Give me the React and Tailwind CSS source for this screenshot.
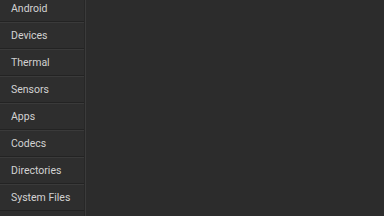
import React from "react";

const items = [
  "Android",
  "Devices",
  "Thermal",
  "Sensors",
  "Apps",
  "Codecs",
  "Directories",
  "System Files",
];

const App = () => {
  return (
    <main
      className="flex w-screen h-screen overflow-hidden bg-[#2c2c2c]"
      style={{ fontFamily: "Roboto, 'Noto Sans', sans-serif" }}
    >
      <aside className="w-[84px] shrink-0 h-full bg-[#2e2e2e]">
        <ul className="-mt-[5px]">
          {items.map((item) => (
            <li
              key={item}
              className="h-[27px] flex items-center pl-[11px] pt-[1px] text-[10.5px] text-[#d2d2d2] border-b border-[#232323] shadow-[inset_0_1px_0_#3a3a3a]"
            >
              {item}
            </li>
          ))}
        </ul>
      </aside>
      <div className="w-[2px] shrink-0 h-full bg-[#3b3b3b] border-l border-[#272727]"></div>
      <section className="flex-1 h-full"></section>
    </main>
  );
};

export default App;
